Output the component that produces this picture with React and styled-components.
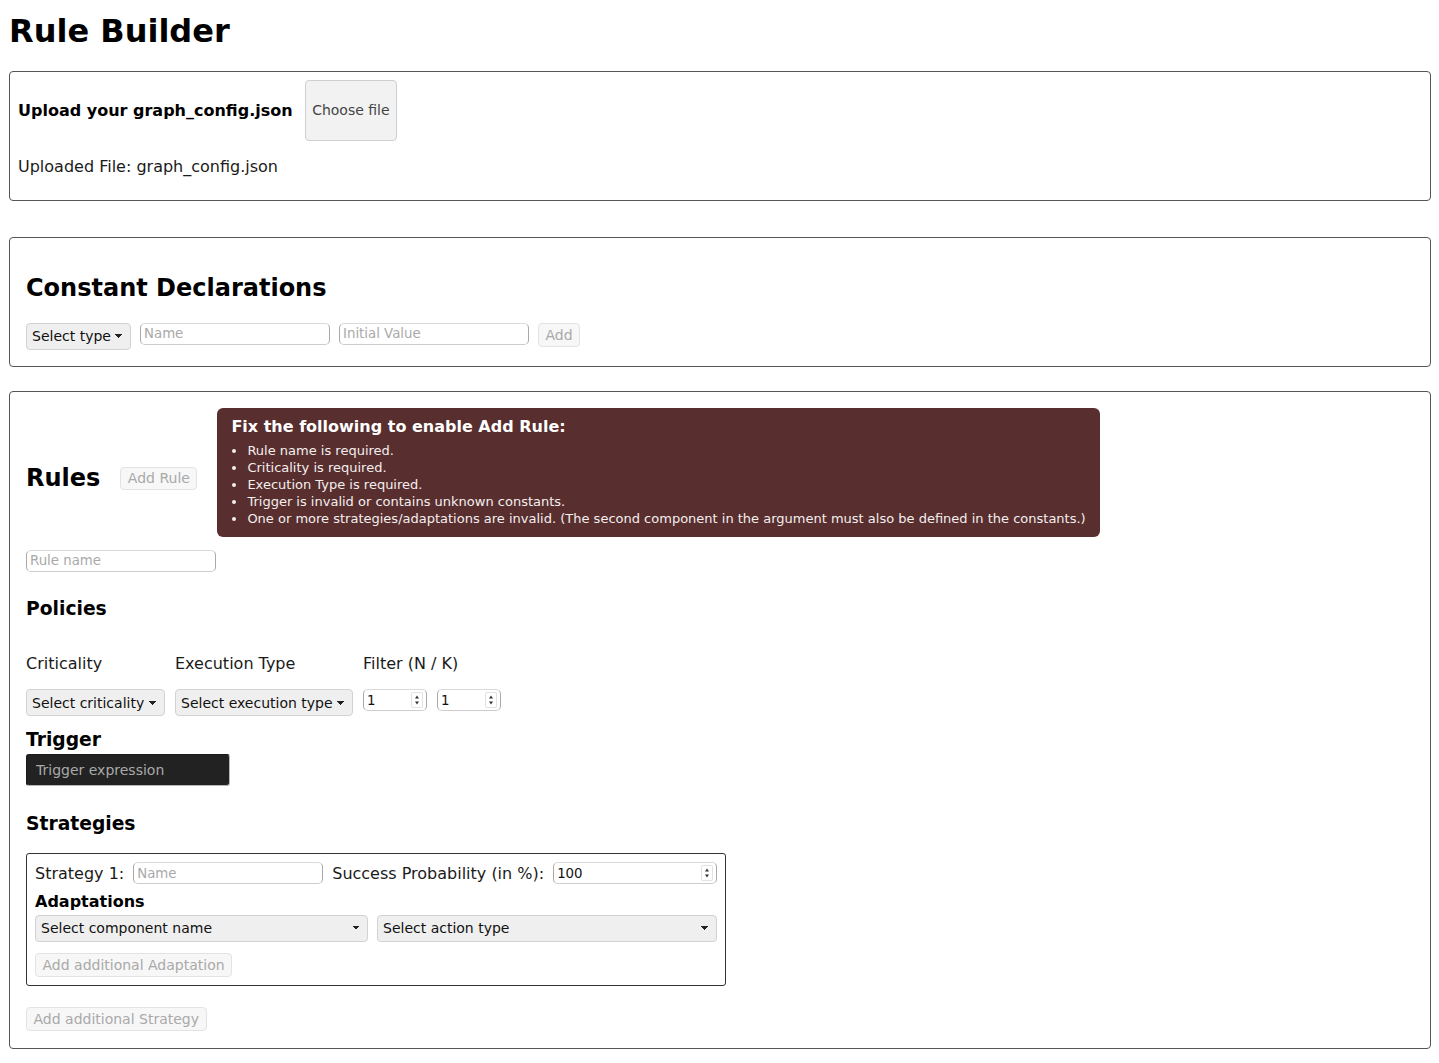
import React from "react";
import styled, { createGlobalStyle } from "styled-components";

const GlobalStyle = createGlobalStyle`
  body {
    margin: 0;
    font-family: "DejaVu Sans", "Noto Sans", sans-serif;
    color: #1a1a1a;
    background: #ffffff;
  }
`;

const Page = styled.div`
  padding: 0 8px 16px 9px;
`;

const Title = styled.h1`
  font-size: 32px;
  font-weight: bold;
  line-height: normal;
  margin: 12px 0 20.5px;
  color: #000;
`;

const Card = styled.section`
  border: 1px solid #555;
  border-radius: 4px;
  padding: ${(p) => p.$pad};
  margin-bottom: ${(p) => p.$mb || 0}px;
`;

const UploadRow = styled.div`
  display: flex;
  align-items: center;
  gap: 12px;
`;

const UploadLabel = styled.label`
  font-size: 16px;
  font-weight: bold;
  color: #000;
`;

const Button = styled.button`
  display: ${(p) => (p.$block ? "block" : "inline-block")};
  font-family: "DejaVu Sans", sans-serif;
  font-size: 14px;
  height: ${(p) => p.$h || 24}px;
  padding: 0 6.5px;
  margin: ${(p) => p.$mt || 0}px 0 0;
  border: 1px solid #e3e3e3;
  border-radius: 4px;
  background: #f7f7f7;
  color: #a9a9a9;
  cursor: default;
  flex: none;
`;

const FileButton = styled(Button)`
  border-color: #cfcfcf;
  background: #f2f2f2;
  color: #444;
`;

const Paragraph = styled.p`
  font-size: 16px;
  margin: 16px 0;
`;

const SectionTitle = styled.h2`
  font-size: 24px;
  font-weight: bold;
  line-height: normal;
  margin: ${(p) => p.$m || "0"};
  color: #000;
`;

const SubTitle = styled.h3`
  font-size: 18.72px;
  font-weight: bold;
  line-height: normal;
  margin: ${(p) => p.$m || "0"};
  color: #000;
`;

const InlineRow = styled.div`
  display: flex;
  align-items: flex-start;
  gap: 9px;
`;

const Select = styled.select`
  appearance: none;
  -webkit-appearance: none;
  font-family: "DejaVu Sans", sans-serif;
  font-size: 14px;
  color: #111;
  height: 27px;
  box-sizing: border-box;
  padding: 0 19px 0 5px;
  border: 1px solid #d2d2d2;
  border-radius: 4px;
  background-color: #efefef;
  background-image: linear-gradient(45deg, transparent 50%, #222 50%),
    linear-gradient(135deg, #222 50%, transparent 50%);
  background-position: calc(100% - 11px) center, calc(100% - 7px) center;
  background-size: 4px 4px;
  background-repeat: no-repeat;
  min-width: 0;
`;

const fieldBorder = `
  border: 1px solid;
  border-color: #dadada #a9a9a9 #cdcdcd #a9a9a9;
  border-radius: 5px;
`;

const TextInput = styled.input`
  font-family: "DejaVu Sans", sans-serif;
  font-size: 13.33px;
  color: #111;
  width: 190px;
  height: 22px;
  box-sizing: border-box;
  padding: 0 3px;
  ${fieldBorder}
  background: #fff;
  outline: none;
  margin: ${(p) => p.$m || "0"};
  display: ${(p) => (p.$block ? "block" : "inline-block")};
  flex: none;
  &::placeholder {
    color: #a9a9a9;
  }
`;

const NumberField = styled.div`
  display: flex;
  align-items: center;
  width: ${(p) => (p.$grow ? "auto" : "64px")};
  flex: ${(p) => (p.$grow ? "1 1 0" : "none")};
  min-width: 0;
  height: 22px;
  box-sizing: border-box;
  ${fieldBorder}
  background: #fff;
`;

const NumberInput = styled.input`
  flex: 1 1 0;
  width: 0;
  min-width: 0;
  border: none;
  outline: none;
  background: transparent;
  padding: 0 3px;
  font-family: "DejaVu Sans", sans-serif;
  font-size: 13.33px;
  color: #111;
  appearance: textfield;
  -moz-appearance: textfield;
  &::-webkit-inner-spin-button,
  &::-webkit-outer-spin-button {
    -webkit-appearance: none;
    margin: 0;
  }
`;

const Spinner = styled.span`
  display: flex;
  flex: none;
  width: 12px;
  height: 16px;
  margin-right: 3px;
  border: 1px solid #e2e2e2;
  border-radius: 2px;
  box-sizing: border-box;
`;

function SpinIcon() {
  return (
    <Spinner>
      <svg width="10" height="14" viewBox="0 0 10 14">
        <polygon points="3,5.5 7,5.5 5,2.5" fill="#333" />
        <polygon points="3,8.5 7,8.5 5,11.5" fill="#333" />
      </svg>
    </Spinner>
  );
}

function NumberBox({ value, grow }) {
  return (
    <NumberField $grow={grow}>
      <NumberInput type="number" defaultValue={value} />
      <SpinIcon />
    </NumberField>
  );
}

const RulesHeader = styled.div`
  display: flex;
  align-items: center;
  gap: 20px;
`;

const ErrorBox = styled.div`
  background: #582e2e;
  color: #ffffff;
  border-radius: 6px;
  padding: 9px 14px 10px;
  margin-bottom: 12px;
`;

const ErrorTitle = styled.div`
  font-size: 16px;
  font-weight: bold;
  line-height: normal;
  margin-bottom: 6px;
`;

const ErrorList = styled.ul`
  margin: 0;
  padding-left: 16px;
  font-size: 13px;
  line-height: 17px;
  color: #f4eeee;
`;

const PolicyRow = styled.div`
  display: flex;
  align-items: flex-start;
  gap: 10px;
  margin-top: 35px;
`;

const PolicyColumn = styled.div`
  display: flex;
  flex-direction: column;
  align-items: flex-start;
  gap: 16px;
`;

const FieldLabel = styled.label`
  font-size: 16px;
  line-height: normal;
`;

const NumberPair = styled.div`
  display: flex;
  gap: 10px;
`;

const TriggerInput = styled.input`
  display: block;
  font-family: "DejaVu Sans", sans-serif;
  font-size: 14px;
  width: 204px;
  height: 32px;
  box-sizing: border-box;
  padding: 0 9px;
  background: #222222;
  color: #e0e0e0;
  border: 1px solid;
  border-color: #1a1a1a #b8b8b8 #b8b8b8 #1a1a1a;
  border-radius: 3px;
  outline: none;
  &::placeholder {
    color: #a9a9a9;
  }
`;

const StrategyBox = styled.div`
  width: 700px;
  box-sizing: border-box;
  border: 1px solid #333;
  border-radius: 3px;
  padding: 8px;
`;

const StrategyRow = styled.div`
  display: flex;
  align-items: center;
  gap: 9px;
  height: 22px;
`;

const RowText = styled.span`
  font-size: 16px;
  white-space: nowrap;
`;

const AdaptTitle = styled.div`
  font-size: 16px;
  font-weight: bold;
  line-height: normal;
  margin: 8px 0 3.5px;
  color: #000;
`;

const AdaptGrid = styled.div`
  display: grid;
  grid-template-columns: 333px 1fr;
  gap: 9px;
`;

const errors = [
  "Rule name is required.",
  "Criticality is required.",
  "Execution Type is required.",
  "Trigger is invalid or contains unknown constants.",
  "One or more strategies/adaptations are invalid. (The second component in the argument must also be defined in the constants.)",
];

export default function App() {
  return (
    <Page>
      <GlobalStyle />
      <Title>Rule Builder</Title>

      <Card $pad="8px" $mb={36}>
        <UploadRow>
          <UploadLabel>Upload your graph_config.json</UploadLabel>
          <FileButton type="button" $h={61}>
            Choose file
          </FileButton>
        </UploadRow>
        <Paragraph>Uploaded File: graph_config.json</Paragraph>
      </Card>

      <Card $pad="16px" $mb={24}>
        <SectionTitle $m="20px 0 21px">Constant Declarations</SectionTitle>
        <InlineRow>
          <Select defaultValue="">
            <option value="">Select type</option>
          </Select>
          <TextInput placeholder="Name" />
          <TextInput placeholder="Initial Value" />
          <Button disabled>Add</Button>
        </InlineRow>
      </Card>

      <Card $pad="16px 16px 17px">
        <RulesHeader>
          <SectionTitle>Rules</SectionTitle>
          <Button disabled $h={23}>
            Add Rule
          </Button>
          <ErrorBox>
            <ErrorTitle>Fix the following to enable Add Rule:</ErrorTitle>
            <ErrorList>
              {errors.map((e) => (
                <li key={e}>{e}</li>
              ))}
            </ErrorList>
          </ErrorBox>
        </RulesHeader>
        <TextInput placeholder="Rule name" $block $m="1px 0 0" />

        <SubTitle $m="26.5px 0 0">Policies</SubTitle>
        <PolicyRow>
          <PolicyColumn>
            <FieldLabel>Criticality</FieldLabel>
            <Select defaultValue="">
              <option value="">Select criticality</option>
            </Select>
          </PolicyColumn>
          <PolicyColumn>
            <FieldLabel>Execution Type</FieldLabel>
            <Select defaultValue="">
              <option value="">Select execution type</option>
            </Select>
          </PolicyColumn>
          <PolicyColumn>
            <FieldLabel>Filter (N / K)</FieldLabel>
            <NumberPair>
              <NumberBox value={1} />
              <NumberBox value={1} />
            </NumberPair>
          </PolicyColumn>
        </PolicyRow>

        <SubTitle $m="12.5px 0 4.5px">Trigger</SubTitle>
        <TriggerInput placeholder="Trigger expression" />

        <SubTitle $m="26.5px 0 19.6px">Strategies</SubTitle>
        <StrategyBox>
          <StrategyRow>
            <RowText>Strategy 1:</RowText>
            <TextInput placeholder="Name" />
            <RowText>Success Probability (in %):</RowText>
            <NumberBox value={100} grow />
          </StrategyRow>
          <AdaptTitle>Adaptations</AdaptTitle>
          <AdaptGrid>
            <Select defaultValue="">
              <option value="">Select component name</option>
            </Select>
            <Select defaultValue="">
              <option value="">Select action type</option>
            </Select>
          </AdaptGrid>
          <Button disabled $block $mt={11}>
            Add additional Adaptation
          </Button>
        </StrategyBox>
        <Button disabled $block $mt={21}>
          Add additional Strategy
        </Button>
      </Card>
    </Page>
  );
}
